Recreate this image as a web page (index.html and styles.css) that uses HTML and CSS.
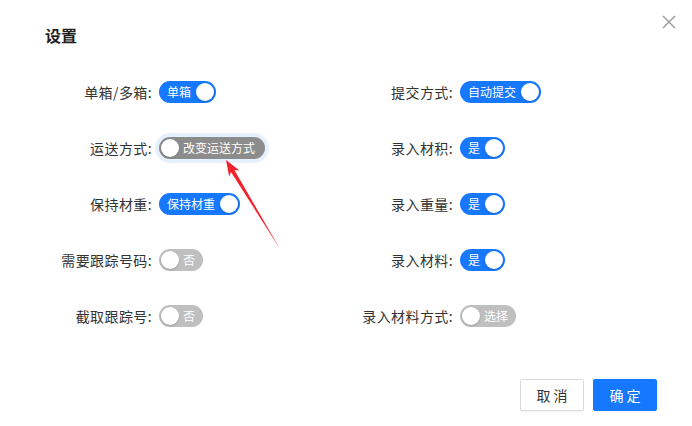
FILE: index.html
```html
<!DOCTYPE html>
<html lang="zh-CN">

<head>
    <meta charset="UTF-8">
    <title>设置</title>
    <link rel="stylesheet" href="styles.css">
</head>

<body>
    <div class="modal">
        <div class="modal-header">
            <h2>设置</h2>
            <button class="close-btn" aria-label="关闭">
                <svg width="14" height="14" viewBox="0 0 14 14">
                    <path d="M1 1 L13 13 M13 1 L1 13" stroke="#999" stroke-width="1.4" fill="none" />
                </svg>
            </button>
        </div>

        <!-- settings form -->
        <div class="form-grid">
            <div class="form-item">
                <label>单箱/多箱:</label>
                <span class="switch on"><span class="switch-text">单箱</span><span class="knob"></span></span>
            </div>
            <div class="form-item">
                <label>提交方式:</label>
                <span class="switch on"><span class="switch-text">自动提交</span><span class="knob"></span></span>
            </div>

            <div class="form-item">
                <label>运送方式:</label>
                <span class="switch off dark focused"><span class="switch-text">改变运送方式</span><span class="knob"></span></span>
            </div>
            <div class="form-item">
                <label>录入材积:</label>
                <span class="switch on"><span class="switch-text">是</span><span class="knob"></span></span>
            </div>

            <div class="form-item">
                <label>保持材重:</label>
                <span class="switch on"><span class="switch-text">保持材重</span><span class="knob"></span></span>
            </div>
            <div class="form-item">
                <label>录入重量:</label>
                <span class="switch on"><span class="switch-text">是</span><span class="knob"></span></span>
            </div>

            <div class="form-item">
                <label>需要跟踪号码:</label>
                <span class="switch off"><span class="switch-text">否</span><span class="knob"></span></span>
            </div>
            <div class="form-item">
                <label>录入材料:</label>
                <span class="switch on"><span class="switch-text">是</span><span class="knob"></span></span>
            </div>

            <div class="form-item">
                <label>截取跟踪号:</label>
                <span class="switch off"><span class="switch-text">否</span><span class="knob"></span></span>
            </div>
            <div class="form-item">
                <label>录入材料方式:</label>
                <span class="switch off"><span class="switch-text">选择</span><span class="knob"></span></span>
            </div>
        </div>

        <div class="modal-footer">
            <button class="btn">取 消</button>
            <button class="btn btn-primary">确 定</button>
        </div>

        <!-- annotation arrow -->
        <svg class="arrow" width="70" height="100" viewBox="0 0 70 100">
            <path d="M5 5 L18.4 15.6 L13.4 15.1 L59 94 L10 17.1 L8.2 21.8 Z" fill="#f5222d" />
        </svg>
    </div>
</body>

</html>
```

FILE: styles.css
```css
* {
    margin: 0;
    padding: 0;
    box-sizing: border-box;
}

body {
    font-family: "Noto Sans CJK SC", "Liberation Sans", sans-serif;
    background: #fff;
    color: #333;
}

.modal {
    position: relative;
    width: 692px;
    height: 426px;
    background: #fff;
}

.modal-header {
    display: flex;
    justify-content: space-between;
    align-items: flex-start;
    padding: 23px 16px 0 45px;
    height: 81px;
}

.modal-header h2 {
    font-size: 16px;
    font-weight: 700;
    line-height: 24px;
    color: #1f1f1f;
}

.close-btn {
    background: none;
    border: none;
    margin-top: -8px;
    width: 14px;
    height: 14px;
    cursor: pointer;
}

/* form grid */
.form-grid {
    display: grid;
    grid-template-columns: 301px 301px;
    row-gap: 34px;
    padding-left: 20px;
}

.form-item {
    display: flex;
    align-items: center;
    height: 22px;
}

.form-item label {
    width: 132px;
    text-align: right;
    font-size: 14px;
    color: #333;
    margin-right: 7px;
    white-space: nowrap;
    letter-spacing: 0.4px;
}

/* switches */
.switch {
    position: relative;
    display: inline-flex;
    align-items: center;
    height: 22px;
    border-radius: 11px;
    font-size: 12px;
    color: #fff;
    white-space: nowrap;
    line-height: 22px;
}

.switch.on {
    background: #1677ff;
    padding: 0 25px 0 8px;
}

.switch.off {
    background: #bfbfbf;
    padding: 0 8px 0 24px;
}

.switch.dark {
    background: #8c8c8c;
    padding-right: 10px;
}

.switch.focused {
    box-shadow: 0 0 0 4px #e6f0ff;
}

.knob {
    position: absolute;
    top: 2px;
    width: 18px;
    height: 18px;
    border-radius: 50%;
    background: #fff;
    box-shadow: 0 1px 2px rgba(0, 35, 11, 0.2);
}

.switch.on .knob {
    right: 2px;
}

.switch.off .knob {
    left: 2px;
}

/* footer */
.modal-footer {
    display: flex;
    justify-content: flex-end;
    gap: 9px;
    padding: 52px 35px 0 0;
}

.btn {
    width: 64px;
    height: 32px;
    border: 1px solid #d9d9d9;
    border-radius: 2px;
    background: #fff;
    color: #333;
    font-family: inherit;
    font-size: 14px;
    cursor: pointer;
    box-shadow: 0 2px 0 rgba(0, 0, 0, 0.02);
}

.btn-primary {
    background: #1677ff;
    border-color: #1677ff;
    color: #fff;
}

.arrow {
    position: absolute;
    left: 221px;
    top: 155px;
}
```
